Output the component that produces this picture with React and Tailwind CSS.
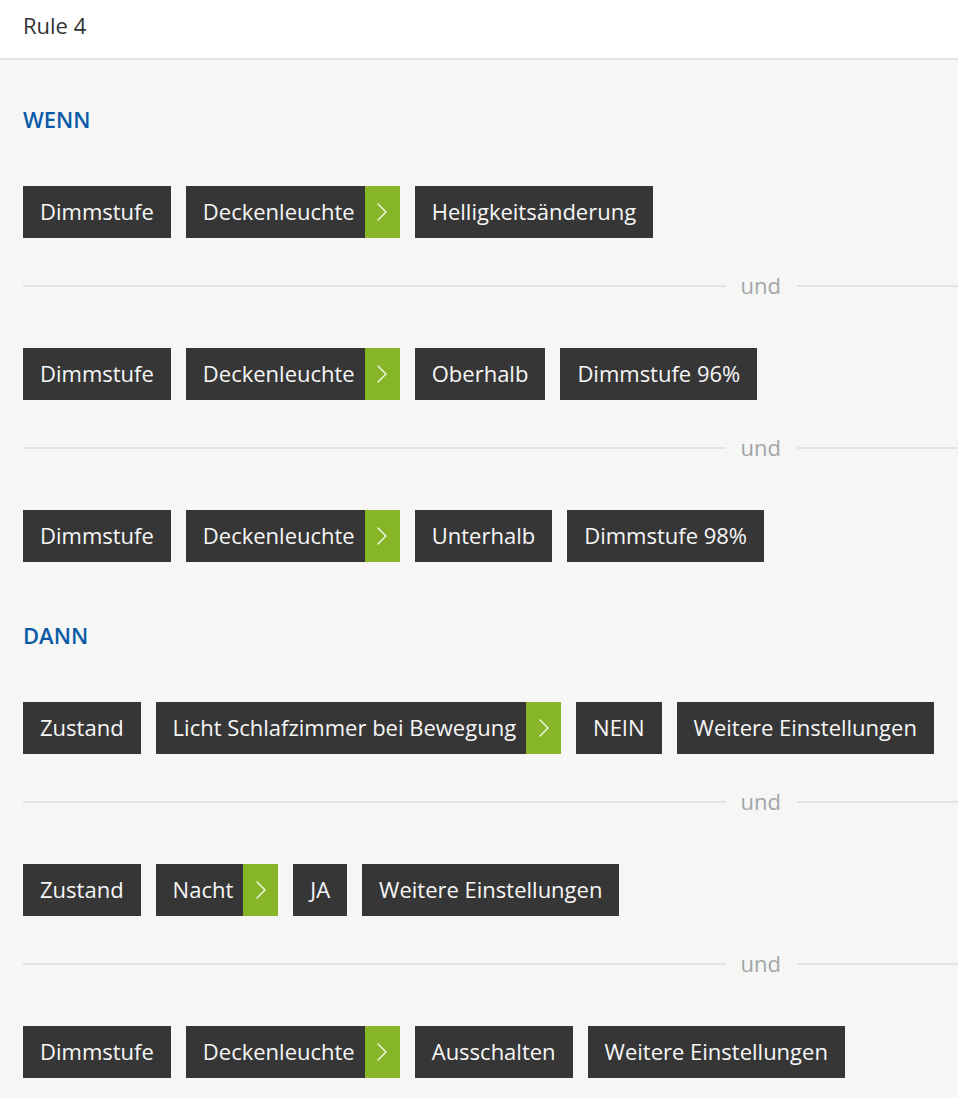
import React from 'react';

const Chevron = () => (
    <svg width="12" height="20" viewBox="0 0 12 20" fill="none">
        <path d="M2 2 L10 10 L2 18" stroke="#eef5e0" strokeWidth="1.5" strokeLinecap="round" strokeLinejoin="round" />
    </svg>
);

const Chip = ({ label, arrow }) => (
    <div className="flex h-[52px] items-stretch bg-[#363636] text-[22px] text-[#f7f7f7]">
        <span className={`flex items-center pb-[2px] pl-[17px] ${arrow ? 'pr-[10px]' : 'pr-[17px]'}`}>{label}</span>
        {arrow && (
            <span className="flex w-[35px] items-center justify-center bg-[#86b627]">
                <Chevron />
            </span>
        )}
    </div>
);

const Row = ({ items }) => (
    <div className="flex h-[52px] gap-[15px]">
        {items.map((it, i) => (
            <Chip key={i} label={it.label} arrow={it.arrow} />
        ))}
    </div>
);

const Divider = () => (
    <div className="mt-[34px] mb-[48px] flex h-[28px] items-center">
        <div className="h-[2px] flex-1 bg-[#e3e3e1]"></div>
        <span className="pl-[15px] pr-[16px] pb-[3px] text-[22px] leading-[28px] text-[#a1a6a9]">und</span>
        <div className="h-[2px] w-[161px] bg-[#e3e3e1]"></div>
    </div>
);

const Label = ({ children, className }) => (
    <div className={`h-[28px] text-[22px] leading-[28px] font-semibold text-[#0a5aa8] ${className}`}>{children}</div>
);

const wenn = [
    [{ label: 'Dimmstufe' }, { label: 'Deckenleuchte', arrow: true }, { label: 'Helligkeitsänderung' }],
    [{ label: 'Dimmstufe' }, { label: 'Deckenleuchte', arrow: true }, { label: 'Oberhalb' }, { label: 'Dimmstufe 96%' }],
    [{ label: 'Dimmstufe' }, { label: 'Deckenleuchte', arrow: true }, { label: 'Unterhalb' }, { label: 'Dimmstufe 98%' }],
];

const dann = [
    [{ label: 'Zustand' }, { label: 'Licht Schlafzimmer bei Bewegung', arrow: true }, { label: 'NEIN' }, { label: 'Weitere Einstellungen' }],
    [{ label: 'Zustand' }, { label: 'Nacht', arrow: true }, { label: 'JA' }, { label: 'Weitere Einstellungen' }],
    [{ label: 'Dimmstufe' }, { label: 'Deckenleuchte', arrow: true }, { label: 'Ausschalten' }, { label: 'Weitere Einstellungen' }],
];

export default function App() {
    return (
        <div className="min-h-screen w-full bg-[#f6f6f4]" style={{ fontFamily: '"Open Sans", "Noto Sans", sans-serif' }}>
            {/* Header */}
            <div className="flex h-[60px] items-start border-b-2 border-[#e3e3e1] bg-white pl-[23px] pt-[11px]">
                <span className="text-[22px] leading-[28px] text-[#333]">Rule 4</span>
            </div>

            <div className="pl-[23px] pb-[20px]">
                <Label className="mt-[45px] mb-[53px]">WENN</Label>
                {wenn.map((r, i) => (
                    <React.Fragment key={i}>
                        {i > 0 && <Divider />}
                        <Row items={r} />
                    </React.Fragment>
                ))}

                <Label className="mt-[59px] mb-[53px]">DANN</Label>
                {dann.map((r, i) => (
                    <React.Fragment key={i}>
                        {i > 0 && <Divider />}
                        <Row items={r} />
                    </React.Fragment>
                ))}
            </div>
        </div>
    );
}
